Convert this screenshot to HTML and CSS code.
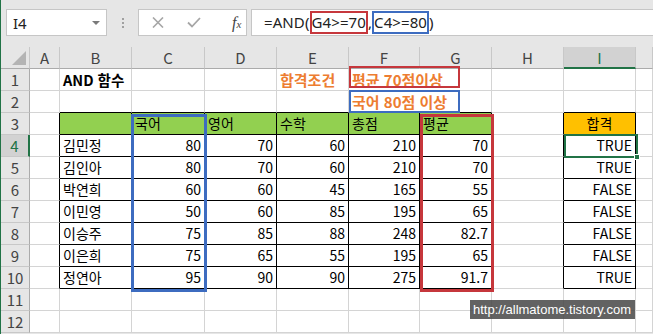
FILE: index.html
```html
<html lang="ko">

<head>
    <meta charset="UTF-8">
    <meta name="viewport" content="width=device-width, initial-scale=1.0">
    <title>AND 함수</title>

    <link rel="stylesheet" href="styles.css">
</head>

<body>
    <div class="fbar">
        <div class="namebox">I4<span class="drop"></span></div>
        <div class="dots"><i></i><i></i><i></i></div>
        <div class="fxbox">
            <svg width="12" height="11" viewBox="0 0 12 11"><path d="M1 0.5 L11 10.5 M11 0.5 L1 10.5" stroke="#a6a6a6" stroke-width="1.6" fill="none"/></svg>
            <svg width="14" height="11" viewBox="0 0 14 11"><path d="M1 5.5 L5 9.5 L13 1" stroke="#a6a6a6" stroke-width="1.8" fill="none"/></svg>
            <span class="fx">f<sub>x</sub></span>
        </div>
        <div class="formula">=AND(<span class="ref red">G4&gt;=70</span>,<span class="ref blue">C4&gt;=80</span>)</div>
    </div>

    <div class="sheet">
        <!-- column headers -->
        <div class="hd corner"><span class="tri"></span></div>
        <div class="hd">A</div>
        <div class="hd">B</div>
        <div class="hd">C</div>
        <div class="hd">D</div>
        <div class="hd">E</div>
        <div class="hd">F</div>
        <div class="hd">G</div>
        <div class="hd">H</div>
        <div class="hd sel">I</div>
        <div class="hd"></div>

        <!-- 1 -->
        <div class="rh">1</div>
        <div class="c"></div>
        <div class="c bold">AND 함수</div>
        <div class="c"></div>
        <div class="c"></div>
        <div class="c orange">합격조건</div>
        <div class="c orange ov">평균 70점이상</div>
        <div class="c"></div>
        <div class="c"></div>
        <div class="c"></div>
        <div class="c"></div>

        <!-- 2 -->
        <div class="rh">2</div>
        <div class="c"></div>
        <div class="c tb"></div>
        <div class="c tb"></div>
        <div class="c tb"></div>
        <div class="c tb"></div>
        <div class="c orange ov tb">국어 80점 이상</div>
        <div class="c tb"></div>
        <div class="c"></div>
        <div class="c tb"></div>
        <div class="c"></div>

        <!-- 3 -->
        <div class="rh">3</div>
        <div class="c tr"></div>
        <div class="c t green"></div>
        <div class="c t green">국어</div>
        <div class="c t green">영어</div>
        <div class="c t green">수학</div>
        <div class="c t green">총점</div>
        <div class="c t green">평균</div>
        <div class="c tr"></div>
        <div class="c t gold">합격</div>
        <div class="c"></div>

        <!-- 4 -->
        <div class="rh cur">4</div>
        <div class="c tr"></div>
        <div class="c t">김민정</div>
        <div class="c t n">80</div>
        <div class="c t n">70</div>
        <div class="c t n">60</div>
        <div class="c t n">210</div>
        <div class="c t n">70</div>
        <div class="c tr"></div>
        <div class="c t n">TRUE</div>
        <div class="c"></div>

        <!-- 5 -->
        <div class="rh">5</div>
        <div class="c tr"></div>
        <div class="c t">김인아</div>
        <div class="c t n">80</div>
        <div class="c t n">70</div>
        <div class="c t n">60</div>
        <div class="c t n">210</div>
        <div class="c t n">70</div>
        <div class="c tr"></div>
        <div class="c t n">TRUE</div>
        <div class="c"></div>

        <!-- 6 -->
        <div class="rh">6</div>
        <div class="c tr"></div>
        <div class="c t">박연희</div>
        <div class="c t n">60</div>
        <div class="c t n">60</div>
        <div class="c t n">45</div>
        <div class="c t n">165</div>
        <div class="c t n">55</div>
        <div class="c tr"></div>
        <div class="c t n">FALSE</div>
        <div class="c"></div>

        <!-- 7 -->
        <div class="rh">7</div>
        <div class="c tr"></div>
        <div class="c t">이민영</div>
        <div class="c t n">50</div>
        <div class="c t n">60</div>
        <div class="c t n">85</div>
        <div class="c t n">195</div>
        <div class="c t n">65</div>
        <div class="c tr"></div>
        <div class="c t n">FALSE</div>
        <div class="c"></div>

        <!-- 8 -->
        <div class="rh">8</div>
        <div class="c tr"></div>
        <div class="c t">이승주</div>
        <div class="c t n">75</div>
        <div class="c t n">85</div>
        <div class="c t n">88</div>
        <div class="c t n">248</div>
        <div class="c t n">82.7</div>
        <div class="c tr"></div>
        <div class="c t n">FALSE</div>
        <div class="c"></div>

        <!-- 9 -->
        <div class="rh">9</div>
        <div class="c tr"></div>
        <div class="c t">이은희</div>
        <div class="c t n">75</div>
        <div class="c t n">65</div>
        <div class="c t n">55</div>
        <div class="c t n">195</div>
        <div class="c t n">65</div>
        <div class="c tr"></div>
        <div class="c t n">FALSE</div>
        <div class="c"></div>

        <!-- 10 -->
        <div class="rh">10</div>
        <div class="c tr"></div>
        <div class="c t">정연아</div>
        <div class="c t n">95</div>
        <div class="c t n">90</div>
        <div class="c t n">90</div>
        <div class="c t n">275</div>
        <div class="c t n">91.7</div>
        <div class="c tr"></div>
        <div class="c t n">TRUE</div>
        <div class="c"></div>

        <!-- 11 -->
        <div class="rh">11</div>
        <div class="c"></div>
        <div class="c"></div>
        <div class="c"></div>
        <div class="c"></div>
        <div class="c"></div>
        <div class="c"></div>
        <div class="c"></div>
        <div class="c"></div>
        <div class="c"></div>
        <div class="c"></div>

        <!-- 12 -->
        <div class="rh">12</div>
        <div class="c"></div>
        <div class="c"></div>
        <div class="c"></div>
        <div class="c"></div>
        <div class="c"></div>
        <div class="c"></div>
        <div class="c"></div>
        <div class="c"></div>
        <div class="c"></div>
        <div class="c"></div>

        <!-- shapes drawn over the sheet -->
        <div class="box red-box cond1"></div>
        <div class="box blue-box cond2"></div>
        <div class="box blue-box col colC"></div>
        <div class="box red-box col colG"></div>
        <div class="cursor"><span class="handle"></span></div>
        <div class="stamp">http://allmatome.tistory.com</div>
    </div>
</body>

</html>
```

FILE: styles.css
```css
* {
    box-sizing: border-box;
    margin: 0;
    padding: 0;
}

html,
body {
    height: 100%;
    overflow: hidden;
}

body {
    background: #e6e6e6;
    border-left: 1px solid #217346;
    font-family: "Noto Sans CJK KR", "Noto Sans", sans-serif;
    color: #000;
}

/* formula bar */
.fbar {
    height: 47px;
    display: flex;
    align-items: flex-start;
    padding-top: 9px;
    padding-left: 5px;
}

.namebox {
    width: 101px;
    height: 27px;
    background: white;
    border: 1px solid #c6c6c6;
    display: flex;
    align-items: center;
    justify-content: space-between;
    padding: 0 6px 0 6px;
    font-family: "Noto Sans", sans-serif;
    font-size: 15px;
    color: #222;
}

.drop {
    width: 0;
    height: 0;
    border-left: 4px solid transparent;
    border-right: 4px solid transparent;
    border-top: 4px solid #7a7a7a;
}

.dots {
    width: 31px;
    height: 27px;
    display: flex;
    flex-direction: column;
    align-items: center;
    justify-content: center;
    gap: 2px;
}

.dots>i {
    width: 2px;
    height: 2px;
    background: #a0a0a0;
}

.fxbox {
    width: 109px;
    height: 27px;
    background: white;
    border: 1px solid #c6c6c6;
    display: flex;
    align-items: center;
    padding-left: 13px;
    gap: 23px;
}

.fx {
    font-family: "Liberation Serif", serif;
    font-style: italic;
    font-size: 16px;
    color: #444;
    margin-left: 8px;
}

.fx>sub {
    font-size: 11px;
    vertical-align: 0;
}

.formula {
    flex: 1;
    margin-left: 4px;
    height: 27px;
    background: white;
    border: 1px solid #c6c6c6;
    border-right: none;
    padding-left: 12px;
    font-family: "Noto Sans", sans-serif;
    font-size: 15px;
    line-height: 25px;
    color: #222;
    white-space: nowrap;
    letter-spacing: 0.1px;
}

.ref {
    display: inline-block;
    line-height: 19px;
    border: 2px solid;
}

.ref.red {
    border-color: #c6373c;
}

.ref.blue {
    border-color: #3d6cc0;
}

/* sheet */
.sheet {
    position: relative;
    display: grid;
    grid-template-columns: 29px 30px 72px 73px 72px 72px 71px 72px 72px 72px 1fr;
    grid-auto-rows: 22px;
    background: white;
}

.hd {
    background: #e6e6e6;
    border-right: 1px solid #c8c8c8;
    border-bottom: 1px solid #ababab;
    text-align: center;
    font-size: 15px;
    line-height: 21px;
    color: #444;
}

.hd.sel {
    background: #d2d2d2;
    border-bottom: 2px solid #217346;
    color: #217346;
}

.corner {
    position: relative;
}

.tri {
    position: absolute;
    right: 3px;
    bottom: 3px;
    width: 0;
    height: 0;
    border-left: 14px solid transparent;
    border-bottom: 14px solid #b4b4b4;
}

.rh {
    background: #e6e6e6;
    border-right: 1px solid #ababab;
    border-bottom: 1px solid #c8c8c8;
    text-align: center;
    font-size: 15px;
    line-height: 21px;
    color: #444;
}

.rh.cur {
    background: #d2d2d2;
    border-right: 2px solid #217346;
    color: #217346;
}

.c {
    border-right: 1px solid #d4d4d4;
    border-bottom: 1px solid #d4d4d4;
    padding: 0 3px;
    font-size: 14px;
    line-height: 21px;
    white-space: nowrap;
}

.n {
    text-align: right;
}

.bold {
    font-weight: bold;
    font-size: 14.5px;
}

.orange {
    font-weight: bold;
    font-size: 15px;
    color: #ed7d31;
}

.ov {
    border-right-color: transparent;
}

.t {
    border-right-color: #000;
    border-bottom-color: #000;
}

.tr {
    border-right-color: #000;
}

.tb {
    border-bottom-color: #000;
}

.green {
    background: #92d050;
}

.gold {
    background: #ffc000;
    text-align: center;
}

/* shapes */
.box {
    position: absolute;
    border: 2px solid;
}

.red-box {
    border-color: #c6373c;
}

.blue-box {
    border-color: #3d6cc0;
}

.col {
    border-width: 3px;
}

.cond1 {
    left: 348px;
    top: 19px;
    width: 111px;
    height: 22px;
}

.cond2 {
    left: 348px;
    top: 43px;
    width: 111px;
    height: 23px;
}

.colC {
    left: 130px;
    top: 67px;
    width: 76px;
    height: 178px;
}

.colG {
    left: 419px;
    top: 67px;
    width: 74px;
    height: 178px;
}

.cursor {
    position: absolute;
    left: 563px;
    top: 87px;
    width: 74px;
    height: 24px;
    border: 2px solid #217346;
}

.handle {
    position: absolute;
    right: -4px;
    bottom: -4px;
    width: 6px;
    height: 6px;
    background: #217346;
    border: 1px solid white;
}

.stamp {
    position: absolute;
    left: 469px;
    top: 253px;
    width: 165px;
    height: 19px;
    background: rgba(70, 70, 70, 0.85);
    color: white;
    font-family: "Liberation Sans", sans-serif;
    font-size: 13px;
    line-height: 19px;
    padding-left: 3px;
    white-space: nowrap;
}
```
